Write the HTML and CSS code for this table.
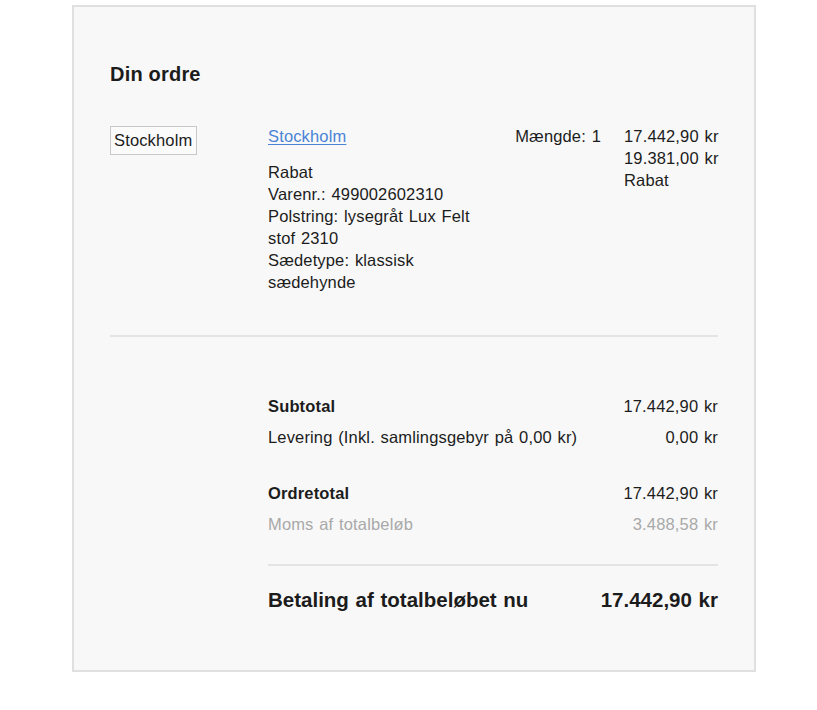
FILE: index.html
```html
<!DOCTYPE html>
<html lang="da">
<head>
<meta charset="UTF-8">
<meta name="viewport" content="width=device-width, initial-scale=1.0">
<title>Din ordre</title>
<link rel="stylesheet" href="styles.css">
</head>
<body>
<div class="order">
  <h2>Din ordre</h2>

  <div class="item">
    <div class="thumb-col">
      <span class="thumb">Stockholm</span>
    </div>
    <div class="details">
      <a href="#" class="name">Stockholm</a>
      <div class="info">
        Rabat<br>
        Varenr.: 499002602310<br>
        Polstring: lysegråt Lux Felt stof 2310<br>
        Sædetype: klassisk sædehynde
      </div>
    </div>
    <div class="qty">Mængde: 1</div>
    <div class="prices">
      17.442,90 kr<br>
      19.381,00 kr<br>
      Rabat
    </div>
  </div>

  <hr class="divider">

  <div class="totals">
    <div class="row bold"><span>Subtotal</span><span>17.442,90 kr</span></div>
    <div class="row"><span>Levering (Inkl. samlingsgebyr på 0,00 kr)</span><span>0,00 kr</span></div>
    <div class="row bold spaced"><span>Ordretotal</span><span>17.442,90 kr</span></div>
    <div class="row muted"><span>Moms af totalbeløb</span><span>3.488,58 kr</span></div>
    <hr class="divider small">
    <div class="row grand"><span>Betaling af totalbeløbet nu</span><span>17.442,90 kr</span></div>
  </div>
</div>
</body>
</html>
```

FILE: styles.css
```css
body {
  margin: 0;
  padding: 0;
  background-color: white;
  font-family: "Liberation Sans", Arial, sans-serif;
  color: #1c1c1c;
  font-size: 16.5px;
  line-height: 22px;
  word-spacing: 1px;
  letter-spacing: 0.15px;
}
.order {
  width: 684px;
  box-sizing: border-box;
  margin: 5px 0 0 72px;
  padding: 55px 36px 58px 36px;
  background-color: #f8f8f8;
  border: 2px solid #e0e0e0;
}
h2 {
  margin: 0;
  font-size: 20px;
  line-height: 24px;
  font-weight: bold;
  word-spacing: 0;
  letter-spacing: 0.2px;
}
.item {
  display: flex;
  margin-top: 39px;
}
.thumb-col {
  width: 158px;
  flex-shrink: 0;
  padding-top: 1px;
}
.thumb {
  display: inline-block;
  border: 1px solid #c8c8c8;
  background-color: #fbfbfb;
  padding: 2px 4px 2px 3px;
  line-height: 23px;
  word-spacing: 0;
}
.details {
  width: 220px;
}
.name {
  color: #4a84d6;
  text-decoration: underline;
  text-underline-offset: 2px;
}
.info {
  margin-top: 14px;
}
.qty {
  margin-left: auto;
}
.prices {
  width: 94px;
  margin-left: 23px;
  white-space: nowrap;
}
.divider {
  border: none;
  border-top: 2px solid #e4e4e4;
  margin: 42px 0 0 0;
}
.totals {
  margin: 58px 0 0 158px;
}
.row {
  display: flex;
  justify-content: space-between;
  margin-bottom: 9px;
}
.bold {
  font-weight: bold;
  word-spacing: 0;
}
.bold span:last-child {
  font-weight: normal;
  word-spacing: 1px;
}
.spaced {
  margin-top: 34px;
}
.muted {
  color: #a9a9a9;
  margin-bottom: 0;
}
.divider.small {
  margin-top: 29px;
}
.grand {
  margin-top: 22px;
  margin-bottom: 0;
  font-size: 20.5px;
  line-height: 24px;
  font-weight: bold;
  letter-spacing: 0;
}
```
